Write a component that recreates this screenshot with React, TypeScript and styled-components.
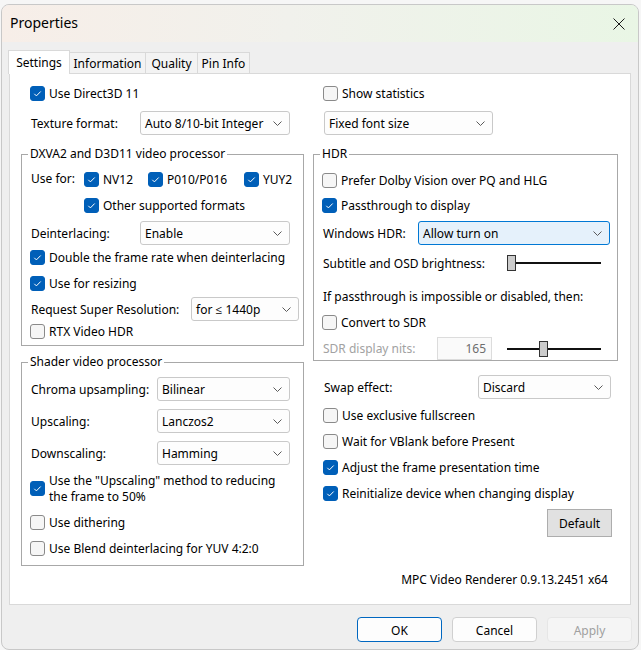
import React from "react";
import styled, { createGlobalStyle } from "styled-components";

const GlobalStyle = createGlobalStyle`
  html, body {
    margin: 0;
    padding: 0;
    background: #f6f6f6;
  }
  body {
    font-family: "Noto Sans", "Open Sans", sans-serif;
    font-size: 12px;
    color: #000;
  }
  * {
    box-sizing: border-box;
  }
`;

const Screen = styled.div`
  width: 641px;
  height: 650px;
  padding: 4px 0 0 1px;
  overflow: hidden;
`;

const Window = styled.div`
  width: 638px;
  height: 646px;
  display: flex;
  flex-direction: column;
  background: #efefef;
  border: 1px solid #c8c8c8;
  border-radius: 8px;
  overflow: hidden;
`;

const TitleBar = styled.div`
  height: 37px;
  flex: none;
  display: flex;
  align-items: center;
  justify-content: space-between;
  padding: 0 13px 0 8px;
  background: linear-gradient(90deg, #f7eee8 0%, #f1f1ec 45%, #e9f6e5 100%);
`;

const Title = styled.div`
  font-size: 14px;
  line-height: 20px;
  margin-top: -1px;
`;

const Body = styled.div`
  display: flex;
  flex-direction: column;
  padding: 8px 7px 0 7px;
`;

const TabStrip = styled.div`
  display: flex;
  align-items: flex-end;
  height: 23px;
  position: relative;
  z-index: 1;
`;

const Tab = styled.div<{ $active?: boolean; $w: number }>`
  width: ${(p) => p.$w}px;
  height: ${(p) => (p.$active ? 24 : 21)}px;
  margin-bottom: ${(p) => (p.$active ? -1 : 0)}px;
  margin-left: -1px;
  display: flex;
  align-items: center;
  justify-content: center;
  padding-top: 1px;
  background: ${(p) => (p.$active ? "#fff" : "#f3f3f3")};
  border: 1px solid #d9d9d9;
  border-bottom: none;
  line-height: 16px;
`;

const Page = styled.div`
  height: 532px;
  background: #fff;
  border: 1px solid #d9d9d9;
  padding: 9px 11px 0 11px;
  display: grid;
  grid-template-columns: 283px 305px;
  column-gap: 9px;
  align-items: start;
`;

const Column = styled.div`
  display: flex;
  flex-direction: column;
`;

const Group = styled.div<{ $mt: number; $pb: number }>`
  position: relative;
  display: flex;
  flex-direction: column;
  margin-top: ${(p) => p.$mt}px;
  padding: 0 9px ${(p) => p.$pb}px 9px;
  border: 1px solid #a8a8a8;
`;

const GroupTitle = styled.span`
  position: absolute;
  top: -9px;
  left: 6px;
  padding: 0 2px;
  background: #fff;
  line-height: 16px;
`;

const CheckRow = styled.label<{ $mt?: number; $ml?: number }>`
  display: flex;
  align-items: center;
  gap: 4px;
  min-height: 20px;
  margin-top: ${(p) => p.$mt ?? 0}px;
  margin-left: ${(p) => p.$ml ?? 0}px;
  line-height: 16px;
  white-space: nowrap;
  & > span:last-child {
    padding-top: 1px;
  }
`;

const Box = styled.span<{ $checked?: boolean }>`
  flex: none;
  width: 15px;
  height: 15px;
  margin-left: -1px;
  border-radius: 3px;
  display: flex;
  align-items: center;
  justify-content: center;
  background: ${(p) => (p.$checked ? "#005fb8" : "#f6f6f6")};
  border: 1px solid ${(p) => (p.$checked ? "#005fb8" : "#8a8a8a")};
`;

const FieldRow = styled.div<{ $mt?: number; $ml?: number }>`
  display: flex;
  align-items: center;
  min-height: 20px;
  margin-top: ${(p) => p.$mt ?? 0}px;
  margin-left: ${(p) => p.$ml ?? 0}px;
  line-height: 16px;
  white-space: nowrap;
`;

const Label = styled.span<{ $w: number; $disabled?: boolean }>`
  flex: none;
  width: ${(p) => p.$w}px;
  padding-top: 1px;
  color: ${(p) => (p.$disabled ? "#a2a2a2" : "#000")};
`;

const SelectBox = styled.div<{ $w: number; $focus?: boolean }>`
  flex: none;
  width: ${(p) => p.$w}px;
  height: 24px;
  display: flex;
  align-items: center;
  justify-content: space-between;
  padding: 1px 7px 0 4px;
  border: 1px solid ${(p) => (p.$focus ? "#0078d4" : "#c9c9c9")};
  border-radius: 3px;
  background: ${(p) => (p.$focus ? "#e5f1fb" : "#fdfdfd")};
  line-height: 16px;
`;

const UseForGrid = styled.div`
  display: grid;
  grid-template-columns: 54px 64px 96px auto;
  align-items: center;
  margin-top: 14px;
  line-height: 16px;
`;

const Track = styled.div<{ $w: number; $ml?: number }>`
  position: relative;
  flex: none;
  width: ${(p) => p.$w}px;
  height: 16px;
  margin-left: ${(p) => p.$ml ?? 0}px;
  &::before {
    content: "";
    position: absolute;
    left: 0;
    right: 0;
    top: 7px;
    height: 2px;
    background: #111;
  }
`;

const Thumb = styled.div<{ $left: number }>`
  position: absolute;
  top: 0;
  left: ${(p) => p.$left}px;
  width: 9px;
  height: 16px;
  background: #cccccc;
  border: 1px solid #333;
`;

const EditBox = styled.div<{ $w: number }>`
  flex: none;
  width: ${(p) => p.$w}px;
  height: 23px;
  display: flex;
  align-items: center;
  justify-content: flex-end;
  padding: 1px 5px 0 0;
  border: 1px solid #dcdcdc;
  background: #fafafa;
  color: #6d6d6d;
`;

const Note = styled.div<{ $mt: number }>`
  margin-top: ${(p) => p.$mt}px;
  padding-top: 1px;
  line-height: 19px;
  white-space: nowrap;
`;

const ClassicButton = styled.div`
  align-self: flex-end;
  margin: 6px 6px 0 0;
  width: 65px;
  height: 28px;
  display: flex;
  align-items: center;
  justify-content: center;
  background: #e1e1e1;
  border: 1px solid #adadad;
`;

const Version = styled.div`
  align-self: flex-end;
  margin: 35px 10px 0 0;
  line-height: 16px;
  white-space: nowrap;
`;

const Footer = styled.div`
  display: flex;
  justify-content: flex-end;
  gap: 10px;
  margin: 12px -1px 0 0;
`;

const DialogButton = styled.div<{ $primary?: boolean; $disabled?: boolean }>`
  width: 85px;
  height: 25px;
  display: flex;
  align-items: center;
  justify-content: center;
  padding-top: 1px;
  border-radius: 4px;
  background: ${(p) => (p.$disabled ? "#f5f5f5" : "#fdfdfd")};
  border: 1px solid
    ${(p) => (p.$primary ? "#0067c0" : p.$disabled ? "#e6e6e6" : "#d0d0d0")};
  color: ${(p) => (p.$disabled ? "#a0a0a0" : "#000")};
`;

function Chevron() {
  return (
    <svg width="9" height="5" viewBox="0 0 9 5">
      <path d="M0.5 0.5 L4.5 4.5 L8.5 0.5" fill="none" stroke="#5a5a5a" strokeWidth="1" />
    </svg>
  );
}

function Check({
  checked,
  mt,
  ml,
  children,
}: {
  checked?: boolean;
  mt?: number;
  ml?: number;
  children: React.ReactNode;
}) {
  return (
    <CheckRow $mt={mt} $ml={ml}>
      <Box $checked={checked}>
        {checked && (
          <svg width="11" height="11" viewBox="0 0 11 11">
            <path d="M2.3 5.8 L4.4 7.9 L8.7 3.5" fill="none" stroke="#fff" strokeWidth="1" />
          </svg>
        )}
      </Box>
      <span>{children}</span>
    </CheckRow>
  );
}

function Select({ w, focus, children }: { w: number; focus?: boolean; children: React.ReactNode }) {
  return (
    <SelectBox $w={w} $focus={focus}>
      <span>{children}</span>
      <Chevron />
    </SelectBox>
  );
}

function Field({
  label,
  lw,
  w,
  mt,
  ml,
  focus,
  value,
}: {
  label: string;
  lw: number;
  w: number;
  mt?: number;
  ml?: number;
  focus?: boolean;
  value: string;
}) {
  return (
    <FieldRow $mt={mt} $ml={ml}>
      <Label $w={lw}>{label}</Label>
      <Select w={w} focus={focus}>
        {value}
      </Select>
    </FieldRow>
  );
}

export default function App() {
  return (
    <>
      <GlobalStyle />
      <Screen>
        <Window>
          <TitleBar>
            <Title>Properties</Title>
            <svg width="12" height="12" viewBox="0 0 12 12">
              <path d="M0.5 0.5 L11.5 11.5 M11.5 0.5 L0.5 11.5" stroke="#1a1a1a" strokeWidth="1" />
            </svg>
          </TitleBar>
          <Body>
            <TabStrip>
              <Tab $active $w={62}>
                Settings
              </Tab>
              <Tab $w={77}>Information</Tab>
              <Tab $w={53}>Quality</Tab>
              <Tab $w={53}>Pin Info</Tab>
            </TabStrip>
            <Page>
              <Column>
                <Check checked ml={10}>
                  Use Direct3D 11
                </Check>
                <Field mt={8} ml={10} label="Texture format:" lw={109} w={150} value="Auto 8/10-bit Integer" />
                <Group $mt={19} $pb={4}>
                  <GroupTitle>DXVA2 and D3D11 video processor</GroupTitle>
                  <UseForGrid>
                    <span>Use for:</span>
                    <Check checked>NV12</Check>
                    <Check checked>P010/P016</Check>
                    <Check checked>YUY2</Check>
                  </UseForGrid>
                  <Check checked mt={6} ml={54}>
                    Other supported formats
                  </Check>
                  <Field mt={6} label="Deinterlacing:" lw={109} w={150} value="Enable" />
                  <Check checked mt={2}>
                    Double the frame rate when deinterlacing
                  </Check>
                  <Check checked mt={6}>
                    Use for resizing
                  </Check>
                  <Field mt={4} label="Request Super Resolution:" lw={160} w={108} value="for ≤ 1440p" />
                  <Check>RTX Video HDR</Check>
                </Group>
                <Group $mt={16} $pb={7}>
                  <GroupTitle>Shader video processor</GroupTitle>
                  <Field mt={14} label="Chroma upsampling:" lw={126} w={133} value="Bilinear" />
                  <Field mt={8} label="Upscaling:" lw={126} w={133} value="Lanczos2" />
                  <Field mt={8} label="Downscaling:" lw={126} w={133} value="Hamming" />
                  <Check checked mt={7}>
                    Use the "Upscaling" method to reducing
                    <br />
                    the frame to 50%
                  </Check>
                  <Check mt={7}>Use dithering</Check>
                  <Check mt={6}>Use Blend deinterlacing for YUV 4:2:0</Check>
                </Group>
              </Column>

              <Column>
                <Check ml={11}>Show statistics</Check>
                <FieldRow $mt={8} $ml={11}>
                  <Select w={169}>Fixed font size</Select>
                </FieldRow>
                <Group $mt={19} $pb={0}>
                  <GroupTitle>HDR</GroupTitle>
                  <Check mt={15}>Prefer Dolby Vision over PQ and HLG</Check>
                  <Check checked mt={5}>
                    Passthrough to display
                  </Check>
                  <Field mt={6} label="Windows HDR:" lw={95} w={192} focus value="Allow turn on" />
                  <FieldRow $mt={8}>
                    <Label $w={184}>Subtitle and OSD brightness:</Label>
                    <Track $w={94}>
                      <Thumb $left={0} />
                    </Track>
                  </FieldRow>
                  <Note $mt={13}>If passthrough is impossible or disabled, then:</Note>
                  <Check mt={6}>Convert to SDR</Check>
                  <FieldRow $mt={5}>
                    <Label $w={114} $disabled>
                      SDR display nits:
                    </Label>
                    <EditBox $w={55}>165</EditBox>
                    <Track $w={94} $ml={15}>
                      <Thumb $left={32} />
                    </Track>
                  </FieldRow>
                </Group>
                <Field mt={14} ml={11} label="Swap effect:" lw={154} w={133} value="Discard" />
                <Check mt={6} ml={11}>
                  Use exclusive fullscreen
                </Check>
                <Check mt={6} ml={11}>
                  Wait for VBlank before Present
                </Check>
                <Check checked mt={6} ml={11}>
                  Adjust the frame presentation time
                </Check>
                <Check checked mt={6} ml={11}>
                  Reinitialize device when changing display
                </Check>
                <ClassicButton>Default</ClassicButton>
                <Version>MPC Video Renderer 0.9.13.2451 x64</Version>
              </Column>
            </Page>
            <Footer>
              <DialogButton $primary>OK</DialogButton>
              <DialogButton>Cancel</DialogButton>
              <DialogButton $disabled>Apply</DialogButton>
            </Footer>
          </Body>
        </Window>
      </Screen>
    </>
  );
}
